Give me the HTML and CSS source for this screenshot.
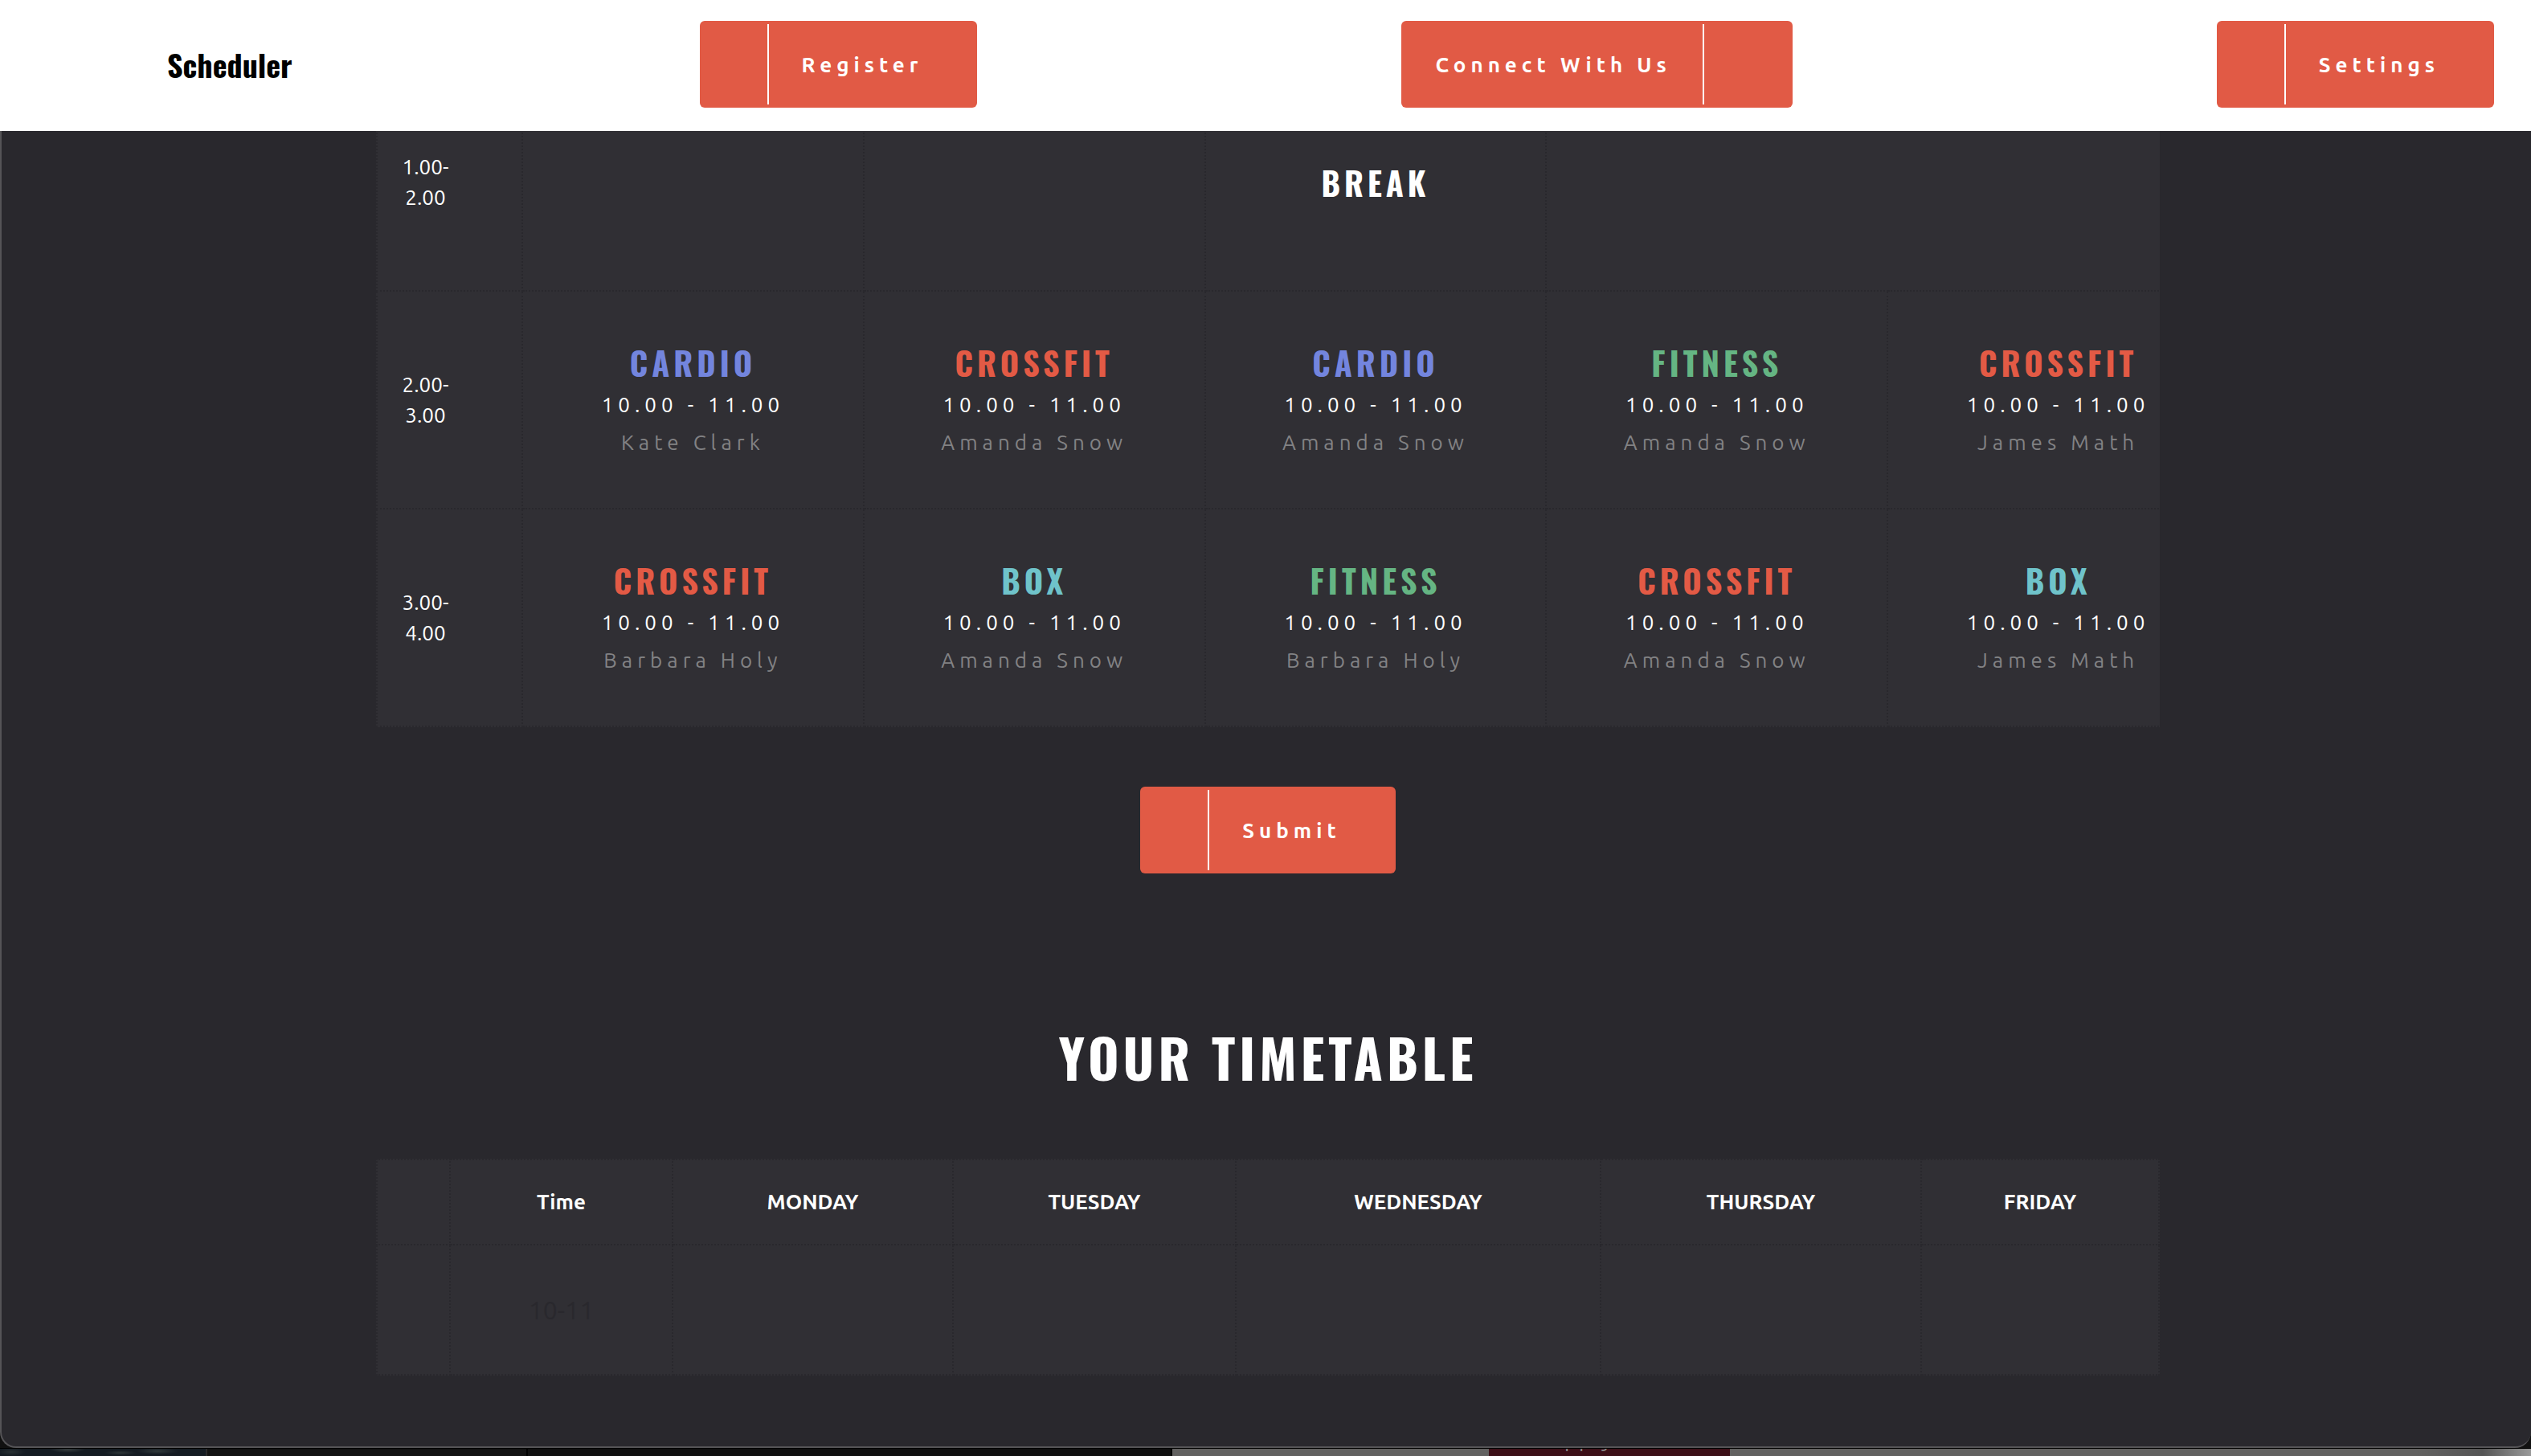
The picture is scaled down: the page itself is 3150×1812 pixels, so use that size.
FILE: index.html
```
<!DOCTYPE html>
<html lang="en">
<head>
<meta charset="utf-8">
<title>Scheduler</title>
<link rel="stylesheet" href="styles.css">
</head>
<body>
<div class="window">
  <header class="topbar">
    <a class="brand" href="#">Scheduler</a>
    <button class="btn" type="button"><span class="btn-icon"></span><span class="btn-label">Register</span></button>
    <button class="btn btn-reverse" type="button"><span class="btn-label">Connect With Us</span><span class="btn-icon"></span></button>
    <button class="btn" type="button"><span class="btn-icon"></span><span class="btn-label">Settings</span></button>
  </header>
  <main class="content">
    <div class="table-clip">
      <table class="schedule">
        <colgroup><col class="col-time"><col class="col-day"><col class="col-day"><col class="col-day"><col class="col-day"><col class="col-day"></colgroup>
        <tbody>
          <tr>
            <th scope="row">1.00-<br>2.00</th>
            <td></td><td></td>
            <td><h3>Break</h3></td>
            <td class="open"></td><td></td>
          </tr>
          <tr>
            <th scope="row">2.00-<br>3.00</th>
            <td><h3 class="cardio">Cardio</h3><p class="time">10.00 - 11.00</p><p class="coach">Kate Clark</p></td>
            <td><h3 class="crossfit">Crossfit</h3><p class="time">10.00 - 11.00</p><p class="coach">Amanda Snow</p></td>
            <td><h3 class="cardio">Cardio</h3><p class="time">10.00 - 11.00</p><p class="coach">Amanda Snow</p></td>
            <td><h3 class="fitness">Fitness</h3><p class="time">10.00 - 11.00</p><p class="coach">Amanda Snow</p></td>
            <td><h3 class="crossfit">Crossfit</h3><p class="time">10.00 - 11.00</p><p class="coach">James Math</p></td>
          </tr>
          <tr>
            <th scope="row">3.00-<br>4.00</th>
            <td><h3 class="crossfit">Crossfit</h3><p class="time">10.00 - 11.00</p><p class="coach">Barbara Holy</p></td>
            <td><h3 class="box">Box</h3><p class="time">10.00 - 11.00</p><p class="coach">Amanda Snow</p></td>
            <td><h3 class="fitness">Fitness</h3><p class="time">10.00 - 11.00</p><p class="coach">Barbara Holy</p></td>
            <td><h3 class="crossfit">Crossfit</h3><p class="time">10.00 - 11.00</p><p class="coach">Amanda Snow</p></td>
            <td><h3 class="box">Box</h3><p class="time">10.00 - 11.00</p><p class="coach">James Math</p></td>
          </tr>
        </tbody>
      </table>
    </div>
    <button class="btn submit" type="submit"><span class="btn-icon"></span><span class="btn-label">Submit</span></button>
    <h2>Your Timetable</h2>
    <table class="timetable">
      <colgroup><col class="w-blank"><col class="w-time"><col class="w-mon"><col class="w-tue"><col class="w-wed"><col class="w-thu"><col class="w-fri"></colgroup>
      <thead>
        <tr><th></th><th scope="col">Time</th><th scope="col">MONDAY</th><th scope="col">TUESDAY</th><th scope="col">WEDNESDAY</th><th scope="col">THURSDAY</th><th scope="col">FRIDAY</th></tr>
      </thead>
      <tbody>
        <tr><td></td><td>10-11</td><td></td><td></td><td></td><td></td><td></td></tr>
      </tbody>
    </table>
  </main>
</div>
<div class="backdrop">
  <div class="tile tile-photo"></div>
  <div class="tile tile-dark"></div>
  <div class="tile tile-panel"></div>
  <div class="tile tile-grey"></div>
  <a class="tile tile-apply" href="#"><span>Apply</span></a>
  <div class="tile tile-rest"></div>
</div>
</body>
</html>
```
FILE: styles.css
```
* { box-sizing: border-box; }

body {
  margin: 0;
  height: 100vh;
  overflow: hidden;
  display: flex;
  flex-direction: column;
  background: #111;
  color: #fff;
  font-family: Ubuntu, "Noto Sans", sans-serif;
  font-size: 26px;
  line-height: 38px;
}

h2, h3, .brand {
  font-family: Oswald, "Liberation Sans Narrow", "Roboto Condensed", "Liberation Sans", sans-serif;
  font-weight: 700;
}

.window {
  flex: 1;
  min-height: 0;
  display: flex;
  flex-direction: column;
}

/* Top bar */
.topbar {
  flex: none;
  height: 163px;
  padding: 26px 46px 29px 208px;
  display: flex;
  justify-content: space-between;
  align-items: center;
  background: #fff;
}

.brand {
  margin-right: -21px;
  color: #000;
  font-size: 38px;
  text-decoration: none;
}

.btn {
  flex: none;
  display: inline-flex;
  align-items: center;
  height: 108px;
  padding: 4px 0;
  border: 0;
  border-radius: 6px;
  background: #e15a45;
  color: #fff;
  font-family: inherit;
  font-size: 26px;
  font-weight: 700;
  letter-spacing: 6px;
}

.btn-icon {
  align-self: stretch;
  width: 86px;
  border-right: 2px solid #fff;
}

.btn-label { padding: 0 68px 0 41px; }

.btn-reverse .btn-icon {
  width: 112px;
  border-right: 0;
  border-left: 2px solid #fff;
}

.btn-reverse .btn-label { padding: 0 39px 0 42px; }

/* Page body */
.content {
  flex: 1;
  min-height: 0;
  display: flex;
  flex-direction: column;
  align-items: center;
  padding-left: 4px;
  background: #29282d;
  border-left: 2px solid #555457;
  border-bottom: 2px solid #555457;
  border-radius: 0 0 20px 20px;
  overflow: hidden;
}

.table-clip {
  flex: none;
  width: 2220px;
  max-width: 100%;
  margin-top: -73px;
  overflow: hidden;
}

table {
  border-collapse: collapse;
  table-layout: fixed;
  background: #302f34;
}

th, td {
  padding: 0;
  border: 2px dotted #29282d;
  text-align: center;
}

.schedule { width: 2307px; }
.col-time { width: 181px; }
.schedule tr { height: 271px; }
.schedule th { padding-right: 60px; font-weight: 400; }
.schedule .open { border-right: 0; }
.schedule .open + td { border-left: 0; }

h3 {
  margin: 0;
  font-size: 40px;
  line-height: 56px;
  letter-spacing: 5px;
  text-transform: uppercase;
}

p { margin: 0; letter-spacing: 6px; }
.time { line-height: 50px; }
.coach { line-height: 44px; color: #828284; }
.cardio { color: #7385de; }
.crossfit { color: #e35a45; }
.fitness { color: #65b583; }
.box { color: #6fc3ca; }

.submit { margin-top: 74px; }

h2 {
  margin: 180px 0 79px;
  font-size: 66px;
  line-height: 96px;
  letter-spacing: 5px;
  text-transform: uppercase;
}

.timetable { width: 2220px; max-width: 100%; }
.timetable thead tr { height: 106px; }
.timetable tbody tr { height: 162px; }
.timetable td { color: #29282d; font-size: 32px; }
.w-blank { width: 91px; }
.w-time { width: 277px; }
.w-mon { width: 349px; }
.w-tue { width: 352px; }
.w-wed { width: 454px; }
.w-thu { width: 399px; }

/* Strip of the windows behind */
.backdrop {
  flex: none;
  height: 10px;
  display: flex;
  border-top: 1px solid #000;
  overflow: hidden;
}

.tile-photo {
  width: 258px;
  border-right: 2px solid #2a2a2a;
  background:
    radial-gradient(ellipse 22px 4px at 84px 1px, #353c3d, transparent),
    radial-gradient(ellipse 20px 3px at 150px 5px, #2d3638, transparent),
    radial-gradient(ellipse 26px 4px at 196px 3px, #30393b, transparent),
    radial-gradient(ellipse 18px 5px at 14px 4px, #283033, transparent),
    #141b22;
}
.tile-dark { width: 399px; background: #121212; border-right: 2px solid #000; }
.tile-panel { width: 802px; background: #0f0f0f; border-right: 2px solid #000; }
.tile-grey { width: 394px; background: #626160; }
.tile-apply {
  width: 300px;
  padding-left: 74px;
  background: #3c0f17;
  color: #888;
  letter-spacing: 3px;
  line-height: 0;
  text-decoration: none;
}
.tile-apply span { display: block; margin-top: -11px; }
.tile-rest {
  flex: 1;
  background: linear-gradient(to right, #626160 calc(100% - 140px), #555 calc(100% - 60px), #999);
}
```
